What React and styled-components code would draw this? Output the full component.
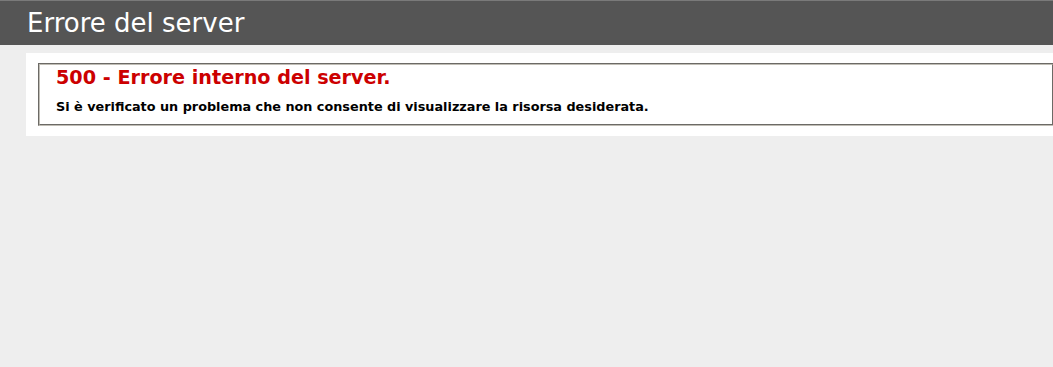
import React from "react";
import styled, { createGlobalStyle } from "styled-components";

const GlobalStyle = createGlobalStyle`
  html, body {
    margin: 0;
    padding: 0;
  }
  body {
    font-size: 11.2px;
    font-family: "DejaVu Sans", Verdana, sans-serif;
    background: #eeeeee;
    overflow: hidden;
    min-height: 367px;
  }
`;

const Header = styled.div`
  padding: 6px 27px;
  background-color: #555555;
  border-top: 1px solid #7a7a7a;
  font-family: "DejaVu Sans", sans-serif;
  color: #fff;
`;

const Title = styled.h1`
  margin: 0;
  font-size: 26px;
  font-weight: normal;
  line-height: 32px;
  color: #fff;
`;

const Content = styled.div`
  margin: 0 0 0 26px;
`;

const Container = styled.div`
  background: #fff;
  width: 1040px;
  margin-top: 8px;
  padding: 10px;
  box-sizing: border-box;
`;

const Box = styled.fieldset`
  margin: 0 2px;
  padding: 1px 15px 10px 16px;
  border: 2px groove #c0bdb5;
`;

const Heading = styled.h2`
  margin: 0;
  font-size: 19.2px;
  color: #cc0000;
`;

const Message = styled.h3`
  margin: 10px 0 0 0;
  font-size: 12.8px;
  color: #000;
`;

export default function App() {
  return (
    <>
      <GlobalStyle />
      <Header>
        <Title>Errore del server</Title>
      </Header>
      <Content>
        <Container>
          <Box>
            <Heading>500 - Errore interno del server.</Heading>
            <Message>
              Si è verificato un problema che non consente di visualizzare la
              risorsa desiderata.
            </Message>
          </Box>
        </Container>
      </Content>
    </>
  );
}
